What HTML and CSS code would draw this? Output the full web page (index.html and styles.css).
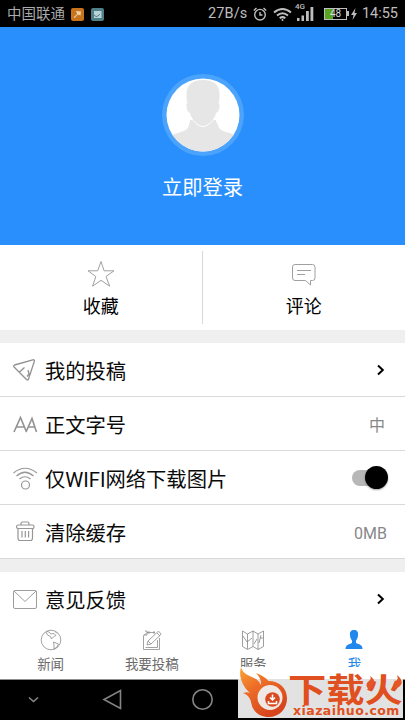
FILE: index.html
```
<!DOCTYPE html>
<html lang="zh-CN">
<head>
<meta charset="utf-8">
<title>我</title>
<link rel="stylesheet" href="styles.css">
</head>
<body>
<div class="phone">
  <header class="status">
    <span class="carrier">中国联通</span>
    <svg class="note" width="13" height="13" viewBox="0 0 13 13"><rect width="13" height="13" rx="2" fill="#c8741c"/><path d="M5 3l5 .5-.5 4-2.500-1-3.500 3.500-.8-.8L6.200 6z" fill="#f0d2ae"/></svg>
    <svg class="note2" width="13" height="13" viewBox="0 0 13 13"><rect width="13" height="13" rx="2" fill="#4f7f89"/><rect x="3" y="3" width="7.500" height="7" fill="#b9d3d6"/><path d="M3 7l2 1.500 2-.5 2-2" fill="none" stroke="#4f7f89"/></svg>
    <span class="speed">27B/s</span>
    <svg class="clock" width="14" height="14" viewBox="0 0 14 14" fill="none" stroke="#bebebe" stroke-width="1.400"><circle cx="7" cy="7.700" r="5.300"/><path d="M7 5v3h2.500M.8 3.500L3.500 1M13.200 3.500L10.500 1"/></svg>
    <svg class="wifi" width="19" height="15" viewBox="0 0 19 15" fill="none" stroke="#bebebe" stroke-width="2"><path d="M1 5.500Q9.500-1.500 18 5.500M4 8.500Q9.500 4 15 8.500M6.700 11.200Q9.500 9 12.300 11.200"/><circle cx="9.500" cy="13" r="1" fill="#bebebe" stroke="none"/></svg>
    <span class="signal"><b>4G</b><svg width="17" height="14" viewBox="0 0 17 14" fill="#bebebe"><path d="M0 11h2.500v3H0zM4.500 8.500H7V14H4.500zM9 4h2.800v10H9zM13.500 0h2.800v14h-2.800z"/></svg></span>
    <span class="battery"><span>48</span></span>
    <svg class="bolt" width="6" height="12" viewBox="0 0 6 12"><path d="M4.500 0L0 7h2.500L1.500 12 6 5H3.500z" fill="#bebebe"/></svg>
    <span class="time">14:55</span>
  </header>

  <section class="profile">
    <svg width="82" height="82" viewBox="0 0 82 82">
      <defs><clipPath id="face"><circle cx="41" cy="41" r="36.500"/></clipPath></defs>
      <circle cx="41" cy="41" r="41" fill="#4ba3fb"/><circle cx="41" cy="41" r="36.500" fill="#fff"/>
      <g clip-path="url(#face)" fill="#e6e6e6"><path d="M28 46h26v2c2 1 2 4 3 6 2 2 4 3 7 4 7 2 12 4 15 8v16H4V66c3-4 8-6 15-8 3-1 5-2 7-4 1-2 1-5 2-6z"/><path d="M41 5.500C30 5.500 24 11 24 20c0 4 0 6 1 9-2 1-1 9 2.500 10C29 46 36 52.500 41 52.500S53 46 54.500 39C58 38 59 30 57 29c1-3 1-5 1-9C58 11 52 5.500 41 5.500z" stroke="#fff" stroke-width="1"/></g>
    </svg>
    <div class="login">立即登录</div>
  </section>

  <section class="shortcuts">
    <div class="short">
      <svg width="28" height="28" viewBox="0 0 28 28" fill="none" stroke="#a0a0a0"><path d="M14 1.500l3.100 9.300h9.900l-8 5.700 3.700 9.700-8.700-5.900-8.400 5.900 3.200-9.700-7.800-5.700h9.700z"/></svg>
      <span>收藏</span>
    </div>
    <div class="short">
      <svg width="28" height="28" viewBox="0 0 28 28" fill="none" stroke="#a0a0a0"><path d="M5 4.500h17.500q2.500 0 2.500 2.500v11q0 2.500-2.500 2.500H20.500v4.500l-5-4.500H5q-2.500 0-2.500-2.500V7q0-2.500 2.500-2.500zM7 10.500h14M7 14.500h8"/></svg>
      <span>评论</span>
    </div>
  </section>

  <main class="list">
    <div class="row"><svg class="ico" viewBox="0 0 26 26" fill="none" stroke="#919191" stroke-width="1.300" stroke-linejoin="round"><path d="M2.500 8Q1 9 2.300 10.300L14.500 22.500q1.500 1.200 2-.5L22.300 4.500q.5-2-1.500-1.700zM7.500 15l5-4.500M16 13l1 4-2 2.500"/></svg><span>我的投稿</span><svg class="chev" width="10" height="12" viewBox="0 0 10 12"><path d="M2 1.500L6.800 6 2 10.500" fill="none" stroke="#000" stroke-width="2"/></svg></div>
    <div class="row"><svg class="ico" viewBox="0 0 26 26" fill="none" stroke="#929292" stroke-width="1.600"><path d="M2 21L8.500 6.500l6 14.500M4.500 16h8M14 21L20 7.500 24.500 21M15.500 16h7.500"/></svg><span>正文字号</span><span class="value mid">中</span></div>
    <div class="row"><svg class="ico" viewBox="0 0 26 26" fill="none" stroke="#989898" stroke-width="1.200"><path d="M1.500 8Q13-1.500 25 8M4.500 11Q13 3.500 21.500 11M7.500 14Q13 9.500 18.500 14"/><circle cx="13.500" cy="20" r="4"/></svg><span>仅WIFI网络下载图片</span><span class="switch"></span></div>
    <div class="row"><svg class="ico" viewBox="0 0 26 26" fill="none" stroke="#969696" stroke-width="1.200"><path d="M9 6V4.500q0-1.500 1.500-1.500h5q1.500 0 1.500 1.500V6M6 6h14.500q1.500 0 1.500 1.800t-1.500 1.700H6q-1.500 0-1.500-1.700T6 6zM6 9.500v9.500q0 2.500 2 2.500h10.500q2 0 2-2.500V9.500M10 12v6.500M13.300 12v6.500M16.600 12v6.500"/></svg><span>清除缓存</span><span class="value">0MB</span></div>
    <div class="gap"></div>
    <div class="row last"><svg class="ico" viewBox="0 0 26 26" fill="none" stroke="#9d9d9d"><rect x="1.500" y="4.500" width="23" height="18" rx="1.500"/><path d="M2 5l11 10.500L24 5"/></svg><span>意见反馈</span><svg class="chev" width="10" height="12" viewBox="0 0 10 12"><path d="M2 1.500L6.800 6 2 10.500" fill="none" stroke="#000" stroke-width="2"/></svg></div>
  </main>

  <nav class="tabs">
    <div class="tab"><svg viewBox="0 0 22 22" fill="none" stroke="#8b8b8b" stroke-width=".8"><circle cx="11" cy="11" r="9.800"/><path d="M6 3l1.500 3 3 1.500 1 2.500 3-3 1.500-.5-2-2-3 .5L9 3 7 2.500M13.500 13l5 2-1.500 3-3 2v-4zM15 2.500l2 2"/></svg><span>新闻</span></div>
    <div class="tab"><svg viewBox="0 0 22 22" fill="none" stroke="#8b8b8b" stroke-width=".8"><path d="M14 3.500H6L2.500 7v13.500h16V9M4 2h2v4H2.500M8 2v3M13 2v3M6 16l1-4 9.500-9q1-1 2.500.500t.5 2.500L10 15zM7 12l3 3M16 4l3 3M4.500 18.500h12V11"/></svg><span>我要投稿</span></div>
    <div class="tab"><svg viewBox="0 0 22 22" fill="none" stroke="#858585" stroke-width=".8"><path d="M.5 2l5 3 5.500-3 5 3 5.500-3v15.500L16 20.500l-5-3-5.500 3-5-3zM5.500 5v15M11 2v15.500M16 5v15.500M1 7l4 6 5-4M12 15l3-5M17 14l2-8M18 9h3"/></svg><span>服务</span></div>
    <div class="tab on"><svg viewBox="0 0 22 22" fill="#2288ee"><path d="M11 1C8 1 6.500 3 7 6c0 3 1 4 2 5.500V14c-3 1.500-6.500 1.500-6.500 6h17c0-4.500-3.500-4.500-6.500-6v-2.500C14 10 15 9 15 6c.5-3-1-5-4-5z"/></svg><span>我</span></div>
  </nav>

  <footer class="keys">
    <svg width="240" height="40" viewBox="0 0 240 40" fill="none" stroke="#858585" stroke-width="1.600"><path d="M29 17.500l4.500 4 4.500-4M120.500 10.500v18L104 19.500z"/><circle cx="202.500" cy="19.500" r="9.700"/></svg>
  </footer>

  <aside class="mark">
    <svg class="flame" width="50" height="52" viewBox="0 0 50 52">
      <defs><linearGradient id="fire" x1="0" y1="0" x2=".6" y2="1"><stop offset="0" stop-color="#f8a83e"/><stop offset=".4" stop-color="#ee6f27"/><stop offset="1" stop-color="#d6431c"/></linearGradient></defs>
      <path d="M3 1C5 8 10 9 16 12c4 2 6 4 6.500 7C24 16 22 11 18 7c6 2 10 5 12.500 8C41 15 49 22 49 32.500 49 43 41 51 31 51c-9 0-16-5-17.500-13C12.500 32 10 29 5 27c3-1 5-1 7 0C5 21 0 11 3 1z" fill="url(#fire)"/>
      <circle cx="32" cy="31.500" r="12.500" fill="#efe9e6"/><circle cx="34.500" cy="33.500" r="7.300" fill="#da4a20"/>
      <path d="M34.500 28.500v5m-2.500-2l2.500 2.500 2.500-2.500M30.500 35v2.500h8V35" fill="none" stroke="#fff" stroke-width="1.500"/>
    </svg>
    <div class="brand"><div class="name">下载火</div><div class="site">xiazaihuo.com</div></div>
    <svg class="sparks" width="38" height="18" viewBox="0 0 38 18" fill="#e45527"><path d="M5 15C0 12 1 8 4 6c2-1.500 2-3 1-5 4 3 5 5 3.500 8C7 11 6 12 5 15zM31 15c-4-4-3-7 0-9 2-1.500 2-3 1-6 5 4 6 8 3 11-2 1.500-3 2-4 4z"/></svg>
  </aside>
</div>
</body>
</html>
```
FILE: styles.css
```
* { box-sizing: border-box; }
body { margin: 0; font-family: Roboto, "Noto Sans CJK SC", sans-serif; background: #fff; }
svg { display: block; flex: none; }
.phone { position: relative; width: 405px; height: 720px; overflow: hidden; display: flex; flex-direction: column; }

.status { height: 27px; flex: none; background: #000; color: #bebebe; display: flex; align-items: center; padding: 1px 7px 0; font-size: 14.5px; line-height: 26px; white-space: nowrap; }
.carrier { width: 58px; color: #aaa; padding-top: 1px; }
.note { margin-left: 6px; }
.note2 { margin-left: 7px; }
.speed { margin-left: 104px; width: 39px; letter-spacing: .1px; }
.clock { margin-left: 6px; }
.wifi { margin-left: 6px; }
.signal { position: relative; margin: 0 0 2px 5px; height: 16px; display: flex; align-items: flex-end; }
.signal b { position: absolute; left: -2px; top: -2px; font-size: 8px; line-height: 8px; font-weight: 500; }
.battery { position: relative; margin-left: 10px; width: 23px; height: 12px; border: 1.500px solid #bebebe; background: linear-gradient(90deg, #59a51f 40%, #000 40%); font-size: 10px; line-height: 10px; text-align: center; color: #ddd; display: block; }
.battery::after { content: ""; position: absolute; right: -3px; top: 2px; width: 2px; height: 5px; background: #bebebe; }
.bolt { margin-left: 4px; }
.time { margin-left: auto; }

.profile { height: 218px; flex: none; background: #288ffc; display: flex; flex-direction: column; align-items: center; padding-top: 47px; }
.login { margin-top: 17px; font-size: 20.300px; line-height: 30px; color: #fff; }

.shortcuts { height: 85px; flex: none; display: flex; padding-top: 6px; }
.short { width: 203px; height: 73px; display: flex; flex-direction: column; align-items: center; padding-top: 9px; }
.short:first-child { border-right: 1px solid #d8d8d8; }
.short span { font-size: 18px; line-height: 26px; margin-top: 6px; color: #000; }

.list { flex: none; border-top: 13px solid #efefef; }
.row { height: 54px; display: flex; align-items: center; border-bottom: 1px solid #d9d9d9; padding: 0 18px 0 12px; font-size: 20.300px; line-height: 30px; color: #0a0a0a; white-space: nowrap; }
.row > span:not(.switch) { padding-top: 4px; }
.row.last { border: 0; }
.ico { width: 26px; height: 26px; margin-right: 7px; }
.chev { margin-left: auto; margin-right: 1px; }
.row .value { margin-left: auto; font-size: 16px; color: #888; }
.value.mid { margin-right: 2px; }
.gap { height: 13px; background: #efefef; }
.switch { position: relative; margin-left: auto; width: 35px; height: 16px; border-radius: 8px; background: #b7b7b7; }
.switch::after { content: ""; position: absolute; right: -1px; top: -4px; width: 23px; height: 23px; border-radius: 50%; background: #000; box-shadow: 0 1px 2px rgba(0,0,0,.35); }

.tabs { flex: 1; min-height: 0; display: flex; border-bottom: 1px solid #909090; }
.tab { flex: 1; display: flex; flex-direction: column; align-items: center; padding-top: 3px; color: #6c6c6c; font-size: 13.500px; line-height: 20px; }
.tab svg { width: 22px; height: 22px; margin-bottom: 3px; }
.tab.on { color: #2288ee; }
.keys { height: 40px; flex: none; background: #000; }

.mark { position: absolute; left: 238px; top: 667px; width: 165px; height: 51px; display: flex; background: linear-gradient(#fff 12px, #e2e2e2 12px); color: #e04f20; }
.flame { margin-top: -1px; }
.brand { width: 115px; padding-top: 5px; white-space: nowrap; }
.name { width: 99px; font-family: "Noto Sans CJK SC", sans-serif; font-weight: 700; font-size: 33px; line-height: 33px; transform: scaleX(1.16); transform-origin: 0 0; }
.site { font-family: "DejaVu Sans", sans-serif; font-weight: 700; font-size: 12.500px; line-height: 12px; letter-spacing: .45px; margin: 0 0 0 5px; }
.sparks { position: absolute; right: 0; top: 8px; }
```
